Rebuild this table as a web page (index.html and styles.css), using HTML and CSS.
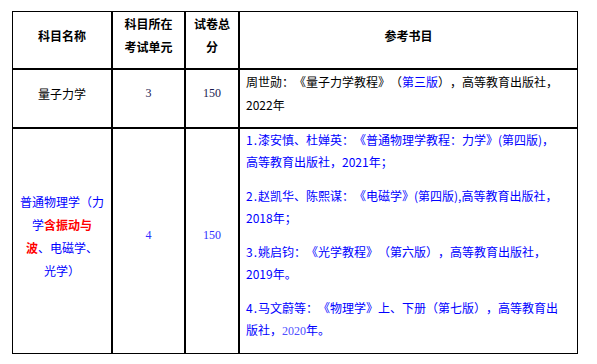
FILE: index.html
```html
<!DOCTYPE html>
<html lang="zh-CN">
<head>
<meta charset="utf-8">
<title>参考书目</title>
<link rel="stylesheet" href="styles.css">
</head>
<body>
<div class="page">
  <table class="exam">
    <colgroup>
      <col class="c-name">
      <col class="c-unit">
      <col class="c-score">
      <col class="c-books">
    </colgroup>
    <thead>
      <tr>
        <th class="cell">科目名称</th>
        <th class="cell">科目所在<br>考试单元</th>
        <th class="cell">试卷总<br>分</th>
        <th class="cell last">参考书目</th>
      </tr>
    </thead>
    <tbody>
      <tr class="row-a">
        <td class="cell center">量子力学</td>
        <td class="cell center num dark">3</td>
        <td class="cell center num dark">150</td>
        <td class="cell last">周世勋：《量子力学教程》（<span class="blue">第三版</span>），高等教育出版社，<br>2022年</td>
      </tr>
      <tr class="row-b">
        <td class="cell center blue bottom">普通物理学（力<br>学<span class="red">含振动与</span><br><span class="red">波</span>、电磁学、<br>光学）</td>
        <td class="cell center num blue-num bottom">4</td>
        <td class="cell center num blue-num bottom">150</td>
        <td class="cell last bottom blue books">
          <p><span class="idx">1.</span>漆安慎、杜婵英：《普通物理学教程：力学》(第四版)，<br>高等教育出版社，2021年；</p>
          <p><span class="idx">2.</span>赵凯华、陈熙谋：《电磁学》(第四版),高等教育出版社，<br>2018年；</p>
          <p><span class="idx">3.</span>姚启钧：《光学教程》（第六版），高等教育出版社，<br>2019年。</p>
          <p><span class="idx">4.</span>马文蔚等：《物理学》上、下册（第七版），高等教育出<br>版社，<span class="serif-num">2020</span>年。</p>
        </td>
      </tr>
    </tbody>
  </table>
</div>
</body>
</html>
```
FILE: styles.css
```css
html, body {
  margin: 0;
  padding: 0;
  background: #ffffff;
}

.page {
  padding: 11px 0 0 12px;
}

.exam {
  box-sizing: border-box;
  width: 566px;
  table-layout: fixed;
  border-collapse: separate;
  border-spacing: 0;
  border: 1px solid #000;
  font-family: "Noto Sans CJK SC", "Noto Sans", sans-serif;
  font-size: 12px;
  color: #000;
  text-spacing-trim: space-all;
  font-feature-settings: "fwid" 0;
}

.c-name { width: 100px; }
.c-unit { width: 73px; }
.c-score { width: 54px; }
.c-books { width: 337px; }

.cell {
  border-right: 2px solid #000;
  border-bottom: 2px solid #000;
  padding: 0 6px 11px;
  vertical-align: middle;
  line-height: 23px;
  text-align: left;
  font-weight: normal;
  white-space: nowrap;
}

th.cell {
  font-weight: bold;
  text-align: center;
  padding-bottom: 10px;
}

.cell.last {
  border-right: 0;
}

.cell.bottom {
  border-bottom: 0;
}

.center {
  text-align: center;
}

.num {
  font-family: "Liberation Serif", "Times New Roman", serif;
}

.dark {
  color: #1a1a50;
}

.blue {
  color: #0000ff;
}

.blue-num {
  color: #3030ff;
}

.red {
  color: #ff0000;
  font-weight: bold;
}

.books {
  line-height: 22px;
}

.books p {
  margin: 0;
}

.books p + p {
  margin-top: 12px;
}

.idx {
  letter-spacing: 1px;
}

.serif-num {
  font-family: "Liberation Serif", "Times New Roman", serif;
  color: #5050ff;
}
```
